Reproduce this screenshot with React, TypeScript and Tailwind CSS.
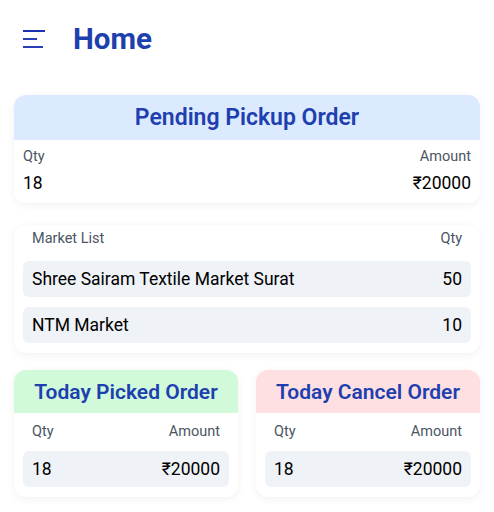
import React from "react";

function SmallCard({ title, bg }: { title: string; bg: string }) {
  return (
    <div className="flex-1 bg-white rounded-xl overflow-hidden shadow-[0_2px_8px_rgba(0,0,0,0.06)]">
      <div className={`h-[43px] pt-[2px] flex items-center justify-center ${bg}`}>
        <span className="text-[21px] font-semibold text-[#1e40af]">{title}</span>
      </div>
      <div className="px-[9px] pt-[9px] pb-[10px]">
        <div className="flex justify-between px-[9px] h-[20px] leading-[20px] text-[14.5px] text-[#4b5563]">
          <span>Qty</span>
          <span>Amount</span>
        </div>
        <div className="mt-[9px] h-[36px] rounded-md bg-[#eff2f6] flex items-center justify-between px-[9px] text-[17.5px] text-black">
          <span>18</span>
          <span>₹20000</span>
        </div>
      </div>
    </div>
  );
}

export default function App() {
  return (
    <div className="w-[494px] h-[512px] bg-white font-['Roboto',sans-serif] overflow-hidden">
      <div className="flex items-center h-[78px] pl-[23px]">
        <svg width="24" height="22" viewBox="0 0 24 22" className="mr-[26px]">
          <line x1="0" y1="3" x2="22" y2="3" stroke="#1d2fb5" strokeWidth="2" />
          <line x1="0" y1="11" x2="14" y2="11" stroke="#2a3eb8" strokeWidth="2" />
          <line x1="0" y1="19" x2="20" y2="19" stroke="#2a3eb8" strokeWidth="2" />
        </svg>
        <span className="text-[29.5px] font-bold text-[#1e40af]">Home</span>
      </div>

      <div className="px-[14px] flex flex-col mt-[17px]">
        <div className="bg-white rounded-xl overflow-hidden shadow-[0_2px_8px_rgba(0,0,0,0.06)]">
          <div className="h-[45px] pt-[2px] bg-[#dbeafe] flex items-center justify-center">
            <span className="text-[23px] font-semibold text-[#1e40af]">Pending Pickup Order</span>
          </div>
          <div className="px-[9px] pt-[7px] pb-[8px]">
            <div className="flex justify-between h-[20px] leading-[20px] text-[14.5px] text-[#4b5563]">
              <span>Qty</span>
              <span>Amount</span>
            </div>
            <div className="mt-[4px] h-[24px] leading-[24px] flex justify-between text-[17.5px] text-black">
              <span>18</span>
              <span>₹20000</span>
            </div>
          </div>
        </div>

        <div className="mt-[22px] bg-white rounded-xl shadow-[0_2px_8px_rgba(0,0,0,0.06)] px-[9px] pt-[4px] pb-[10px]">
          <div className="flex justify-between px-[9px] h-[20px] leading-[20px] text-[14.5px] text-[#4b5563]">
            <span>Market List</span>
            <span>Qty</span>
          </div>
          <div className="mt-[12px] flex flex-col gap-[10px]">
            <div className="h-[36px] rounded-md bg-[#eff2f6] flex items-center justify-between px-[9px] text-[17.5px] text-black">
              <span>Shree Sairam Textile Market Surat</span>
              <span>50</span>
            </div>
            <div className="h-[36px] rounded-md bg-[#eff2f6] flex items-center justify-between px-[9px] text-[17.5px] text-black">
              <span>NTM Market</span>
              <span>10</span>
            </div>
          </div>
        </div>

        <div className="mt-[17px] flex gap-[18px]">
          <SmallCard title="Today Picked Order" bg="bg-[#d1fadb]" />
          <SmallCard title="Today Cancel Order" bg="bg-[#fee0e2]" />
        </div>
      </div>
    </div>
  );
}
